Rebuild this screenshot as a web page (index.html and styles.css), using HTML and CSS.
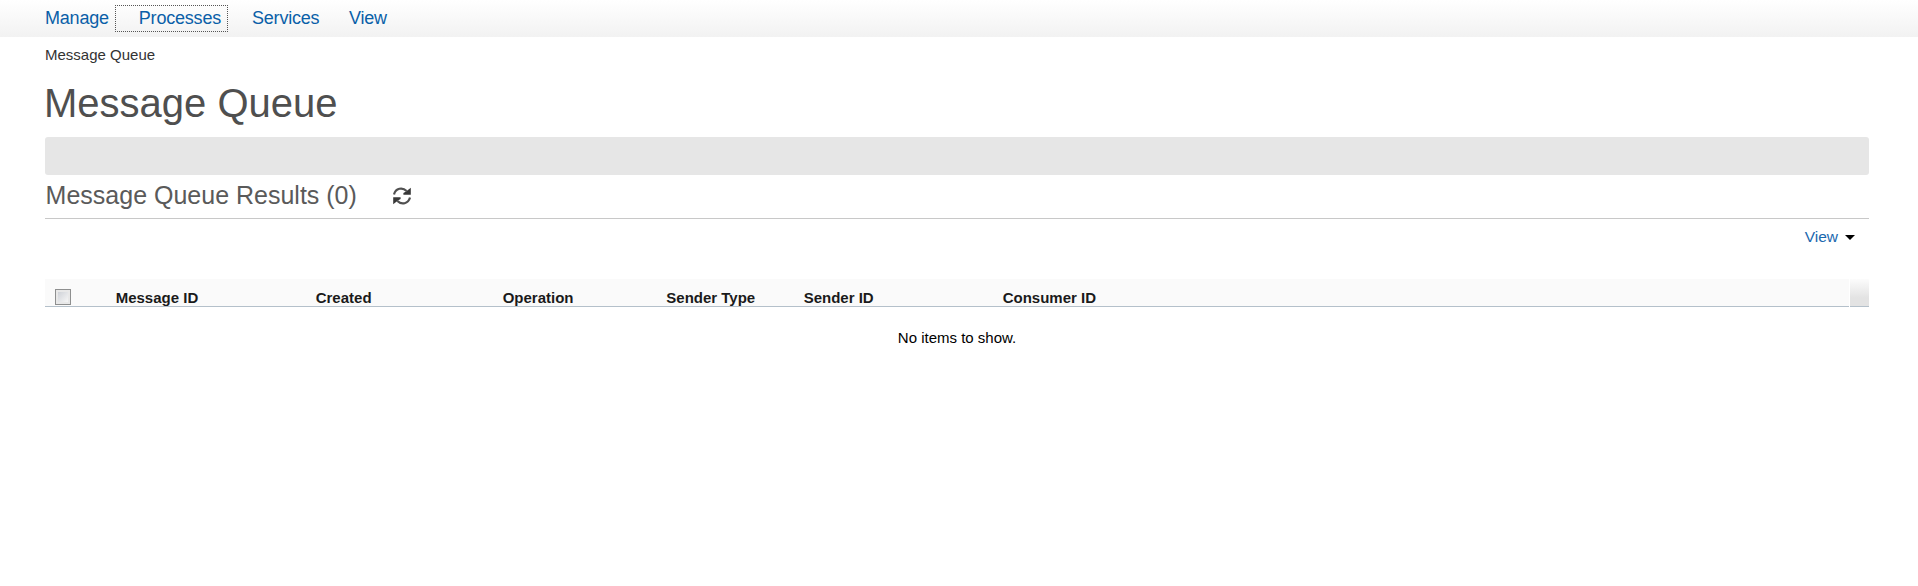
FILE: index.html
```html
<!DOCTYPE html>
<html lang="en">
<head>
<meta charset="utf-8">
<title>Message Queue</title>
<link rel="stylesheet" href="styles.css">
</head>
<body>
<nav class="menu">
  <a class="menu-item manage">Manage</a>
  <a class="menu-item processes focused">Processes</a>
  <a class="menu-item services">Services</a>
  <a class="menu-item view">View</a>
</nav>
<main class="page">
  <div class="breadcrumb">Message Queue</div>
  <h1 class="title">Message Queue</h1>
  <div class="filter-bar"></div>
  <header class="results">
    <h2 class="results-title">Message Queue Results (0)</h2>
    <svg class="refresh" width="18" height="18" viewBox="0 0 18 18" fill="none">
      <path d="M1 7.4C2.6 1.2 9.4-.2 13.6 4" stroke="#505050" stroke-width="2.2"/>
      <path d="M10.4 7.8V6L13 4.4 17.8.8V7.8H10.4Z" fill="#383838"/>
      <path d="M17 10.6C15.4 16.8 8.6 18.2 4.4 14" stroke="#505050" stroke-width="2.2"/>
      <path d="M.2 17.2V10.2H7.6V12L5 13.6Z" fill="#383838"/>
    </svg>
  </header>
  <div class="toolbar">
    <a class="view-link">View</a>
    <svg width="10" height="5" viewBox="0 0 10 5"><path d="M0 0H10L5 5Z" fill="#000"/></svg>
  </div>
  <div class="table-head">
    <div class="columns">
      <span class="check"></span>
      <span class="col message">Message ID</span>
      <span class="col created">Created</span>
      <span class="col operation">Operation</span>
      <span class="col sender-type">Sender Type</span>
      <span class="col sender">Sender ID</span>
      <span class="col consumer">Consumer ID</span>
    </div>
    <div class="corner"></div>
  </div>
  <div class="empty">No items to show.</div>
</main>
</body>
</html>
```
FILE: styles.css
```css
* { box-sizing: border-box; }
body {
  margin: 0;
  background: #fff;
  font-family: "Liberation Sans", Arial, sans-serif;
  font-size: 15px;
  color: #333;
}
.menu {
  display: flex;
  align-items: flex-start;
  height: 37px;
  padding: 5px 0 0 45px;
  background: linear-gradient(#fff, #f2f2f2);
}
.menu-item {
  height: 27px;
  font-size: 18px;
  line-height: 27px;
  letter-spacing: -0.2px;
  color: #0a5fa8;
  white-space: nowrap;
}
.manage { width: 70px; }
.processes { width: 113px; padding-left: 23.8px; }
.focused { outline: 1px dotted #555; outline-offset: -1px; }
.services { width: 97px; margin-left: 24px; }
.page { width: 1824px; margin-left: 45px; }
.breadcrumb { height: 36px; line-height: 36px; }
.title {
  height: 64px;
  margin: 0 0 0 -1px;
  font-size: 40px;
  font-weight: 400;
  line-height: 60px;
  color: #4f4f4f;
}
.filter-bar { height: 38px; border-radius: 3px; background: #e6e6e6; }
.results {
  display: flex;
  height: 44px;
  border-bottom: 1px solid #c8c8c8;
}
.results-title {
  width: 348px;
  margin: 0;
  padding-left: 0.6px;
  font-size: 25px;
  font-weight: 400;
  line-height: 41px;
  color: #5a5a5a;
  white-space: nowrap;
}
.refresh { margin-top: 12px; }
.toolbar {
  display: flex;
  justify-content: flex-end;
  align-items: center;
  gap: 7px;
  height: 60px;
  padding: 0 14px 24px 0;
}
.view-link { font-size: 15.5px; color: #1a68ae; }
.table-head { display: flex; gap: 1px; height: 28px; }
.columns {
  display: flex;
  width: 1804px;
  background: #fafafa;
  border-bottom: 1px solid #b4c0ca;
}
.check {
  width: 16px;
  height: 16px;
  margin: 10px 44.7px 0 10px;
  border: 1px solid #8e8f8f;
  background: linear-gradient(135deg, #cfd2d8, #f6f6f6) content-box, #e8e8e8;
  padding: 2px;
}
.col { padding-top: 10px; font-weight: 700; line-height: 17px; color: #1a1a1a; white-space: nowrap; }
.message { width: 200px; }
.created { width: 187px; }
.operation { width: 163.6px; }
.sender-type { width: 137.4px; }
.sender { width: 199px; }
.corner {
  flex: 1;
  background: linear-gradient(#fcfcfc, #e3e3e3 70%);
  border-bottom: 1px solid #b4c0ca;
}
.empty { height: 62px; line-height: 62px; text-align: center; color: #000; }
```
